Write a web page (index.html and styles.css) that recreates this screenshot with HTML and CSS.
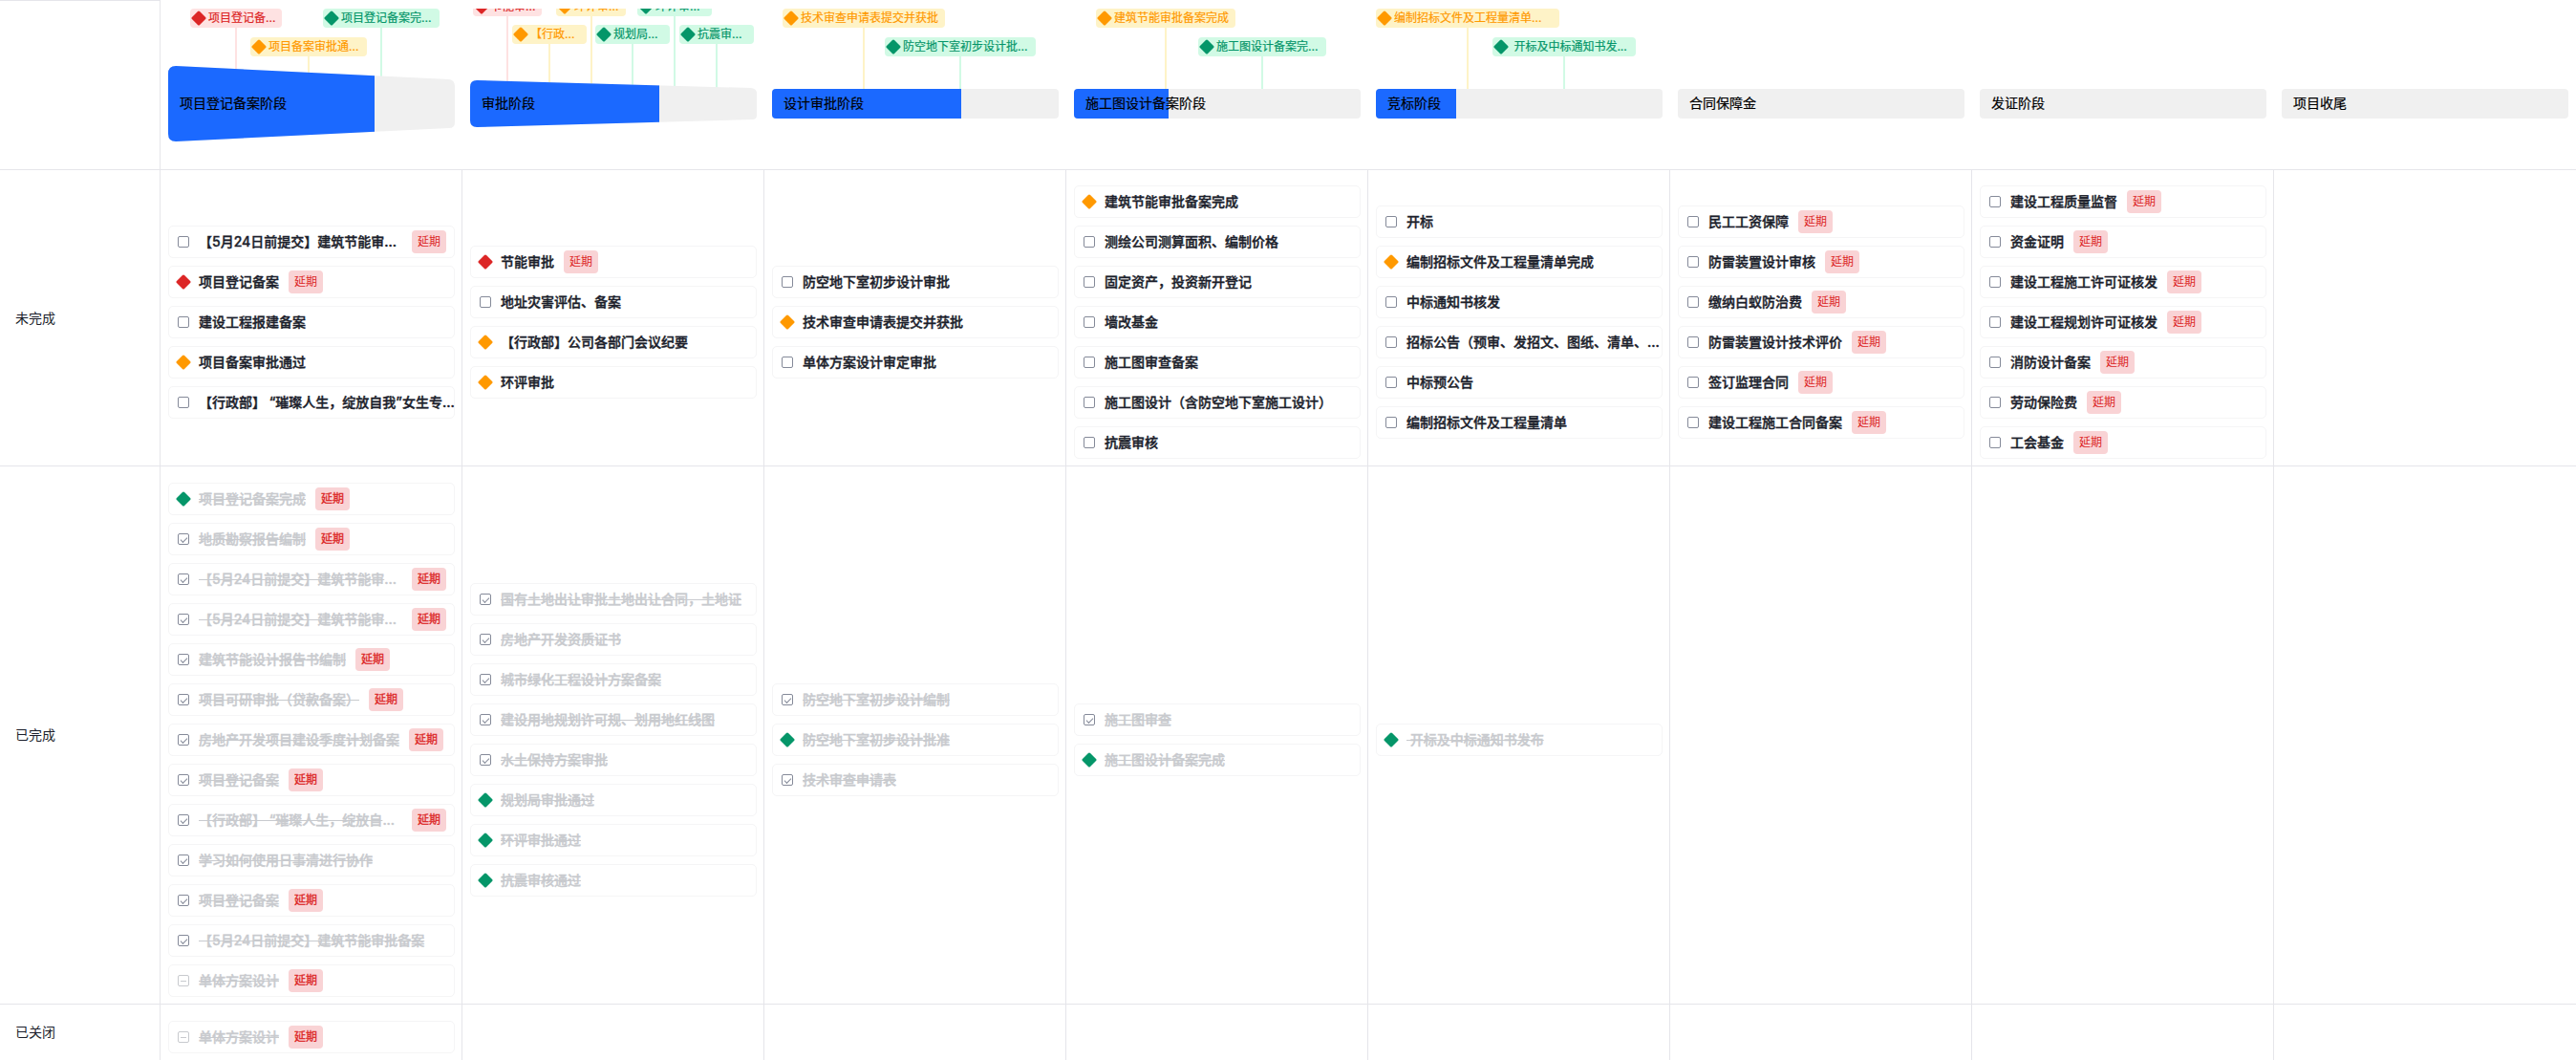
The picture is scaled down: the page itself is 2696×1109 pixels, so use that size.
FILE: index.html
```html
<!DOCTYPE html>
<html lang="zh-CN">
<head>
<meta charset="utf-8">
<title>项目阶段看板</title>
<link rel="stylesheet" href="styles.css">
</head>
<body>
<svg class="defs" aria-hidden="true">
  <symbol id="dia" viewBox="0 0 16 16"><path d="M8 2 14 8 8 14 2 8Z" fill="currentColor" stroke="currentColor" stroke-width="3" stroke-linejoin="round"/></symbol>
</svg>
<table class="board">
<colgroup><col class="col-label"><col><col><col><col><col><col><col><col></colgroup>
<thead>
<tr>
<td class="corner"></td>
<th scope="col"><div class="stage">
  <div class="mile high red" style="left:31px;width:96px"><span class="pill"><svg class="icon"><use href="#dia"/></svg>项目登记备...</span></div>
  <div class="mile low amber" style="left:94px;width:122px"><span class="pill"><svg class="icon"><use href="#dia"/></svg>项目备案审批通...</span></div>
  <div class="mile high green" style="left:170px;width:122px"><span class="pill"><svg class="icon"><use href="#dia"/></svg>项目登记备案完...</span></div>
  <div class="bar"><svg class="shape" viewBox="0 0 300 80" preserveAspectRatio="none"><defs><clipPath id="c1"><path d="M8 0 294 14Q300 15 300 21V59Q300 65 294 65L8 79Q0 79 0 71V8Q0 0 8 0Z"/></clipPath></defs><g clip-path="url(#c1)"><rect class="rest" width="300" height="80"/><rect class="done" width="216" height="80"/></g></svg><span class="name">项目登记备案阶段</span></div>
</div></th>
<th scope="col"><div class="stage">
  <div class="mile top red" style="left:11px;width:72px"><span class="pill"><svg class="icon"><use href="#dia"/></svg>节能审...</span></div>
  <div class="mile mid amber" style="left:52px;width:78px"><span class="pill"><svg class="icon"><use href="#dia"/></svg>【行政...</span></div>
  <div class="mile top amber" style="left:98px;width:73px"><span class="pill"><svg class="icon"><use href="#dia"/></svg>环评审...</span></div>
  <div class="mile mid green" style="left:139px;width:78px"><span class="pill"><svg class="icon"><use href="#dia"/></svg>规划局...</span></div>
  <div class="mile top green" style="left:183px;width:78px"><span class="pill"><svg class="icon"><use href="#dia"/></svg>环评审...</span></div>
  <div class="mile mid green" style="left:227px;width:78px"><span class="pill"><svg class="icon"><use href="#dia"/></svg>抗震审...</span></div>
  <div class="bar"><svg class="shape" viewBox="0 0 300 80" preserveAspectRatio="none"><defs><clipPath id="c2"><path d="M7 15 294 23Q300 24 300 28V52Q300 56 295 56L7 64Q0 64 0 57V22Q0 15 7 15Z"/></clipPath></defs><g clip-path="url(#c2)"><rect class="rest" width="300" height="80"/><rect class="done" width="198" height="80"/></g></svg><span class="name">审批阶段</span></div>
</div></th>
<th scope="col"><div class="stage">
  <div class="mile high amber" style="left:19px;width:170px"><span class="pill"><svg class="icon"><use href="#dia"/></svg>技术审查申请表提交并获批</span></div>
  <div class="mile low green" style="left:126px;width:158px"><span class="pill"><svg class="icon"><use href="#dia"/></svg>防空地下室初步设计批...</span></div>
  <div class="bar"><div class="flat"><div class="fill" style="width:66%"></div></div><span class="name">设计审批阶段</span></div>
</div></th>
<th scope="col"><div class="stage">
  <div class="mile high amber" style="left:31px;width:146px"><span class="pill"><svg class="icon"><use href="#dia"/></svg>建筑节能审批备案完成</span></div>
  <div class="mile low green" style="left:138px;width:134px"><span class="pill"><svg class="icon"><use href="#dia"/></svg>施工图设计备案完...</span></div>
  <div class="bar"><div class="flat"><div class="fill" style="width:33%"></div></div><span class="name">施工图设计备案阶段</span></div>
</div></th>
<th scope="col"><div class="stage">
  <div class="mile high amber" style="left:8px;width:192px"><span class="pill"><svg class="icon"><use href="#dia"/></svg>编制招标文件及工程量清单...</span></div>
  <div class="mile low green" style="left:130px;width:150px"><span class="pill"><svg class="icon"><use href="#dia"/></svg>&nbsp;开标及中标通知书发...</span></div>
  <div class="bar"><div class="flat"><div class="fill" style="width:28%"></div></div><span class="name">竞标阶段</span></div>
</div></th>
<th scope="col"><div class="stage"><div class="bar"><div class="flat"></div><span class="name">合同保障金</span></div></div></th>
<th scope="col"><div class="stage"><div class="bar"><div class="flat"></div><span class="name">发证阶段</span></div></div></th>
<th scope="col"><div class="stage"><div class="bar"><div class="flat"></div><span class="name">项目收尾</span></div></div></th>
</tr>
</thead>
<tbody>
<tr class="row-open">
<th scope="row" class="label">未完成</th>
<td><ul class="cards">
  <li><label class="card"><input type="checkbox"><span class="title">【5月24日前提交】建筑节能审...</span><span class="badge end">延期</span></label></li>
  <li class="card"><svg class="icon red"><use href="#dia"/></svg><span class="title">项目登记备案</span><span class="badge">延期</span></li>
  <li><label class="card"><input type="checkbox"><span class="title">建设工程报建备案</span></label></li>
  <li class="card"><svg class="icon amber"><use href="#dia"/></svg><span class="title">项目备案审批通过</span></li>
  <li><label class="card"><input type="checkbox"><span class="title">【行政部】 “璀璨人生，绽放自我”女生专...</span></label></li>
</ul></td>
<td><ul class="cards">
  <li class="card"><svg class="icon red"><use href="#dia"/></svg><span class="title">节能审批</span><span class="badge">延期</span></li>
  <li><label class="card"><input type="checkbox"><span class="title">地址灾害评估、备案</span></label></li>
  <li class="card"><svg class="icon amber"><use href="#dia"/></svg><span class="title">【行政部】公司各部门会议纪要</span></li>
  <li class="card"><svg class="icon amber"><use href="#dia"/></svg><span class="title">环评审批</span></li>
</ul></td>
<td><ul class="cards">
  <li><label class="card"><input type="checkbox"><span class="title">防空地下室初步设计审批</span></label></li>
  <li class="card"><svg class="icon amber"><use href="#dia"/></svg><span class="title">技术审查申请表提交并获批</span></li>
  <li><label class="card"><input type="checkbox"><span class="title">单体方案设计审定审批</span></label></li>
</ul></td>
<td><ul class="cards">
  <li class="card"><svg class="icon amber"><use href="#dia"/></svg><span class="title">建筑节能审批备案完成</span></li>
  <li><label class="card"><input type="checkbox"><span class="title">测绘公司测算面积、编制价格</span></label></li>
  <li><label class="card"><input type="checkbox"><span class="title">固定资产，投资新开登记</span></label></li>
  <li><label class="card"><input type="checkbox"><span class="title">墙改基金</span></label></li>
  <li><label class="card"><input type="checkbox"><span class="title">施工图审查备案</span></label></li>
  <li><label class="card"><input type="checkbox"><span class="title">施工图设计（含防空地下室施工设计）</span></label></li>
  <li><label class="card"><input type="checkbox"><span class="title">抗震审核</span></label></li>
</ul></td>
<td><ul class="cards">
  <li><label class="card"><input type="checkbox"><span class="title">开标</span></label></li>
  <li class="card"><svg class="icon amber"><use href="#dia"/></svg><span class="title">编制招标文件及工程量清单完成</span></li>
  <li><label class="card"><input type="checkbox"><span class="title">中标通知书核发</span></label></li>
  <li><label class="card"><input type="checkbox"><span class="title">招标公告（预审、发招文、图纸、清单、...</span></label></li>
  <li><label class="card"><input type="checkbox"><span class="title">中标预公告</span></label></li>
  <li><label class="card"><input type="checkbox"><span class="title">编制招标文件及工程量清单</span></label></li>
</ul></td>
<td><ul class="cards">
  <li><label class="card"><input type="checkbox"><span class="title">民工工资保障</span><span class="badge">延期</span></label></li>
  <li><label class="card"><input type="checkbox"><span class="title">防雷装置设计审核</span><span class="badge">延期</span></label></li>
  <li><label class="card"><input type="checkbox"><span class="title">缴纳白蚁防治费</span><span class="badge">延期</span></label></li>
  <li><label class="card"><input type="checkbox"><span class="title">防雷装置设计技术评价</span><span class="badge">延期</span></label></li>
  <li><label class="card"><input type="checkbox"><span class="title">签订监理合同</span><span class="badge">延期</span></label></li>
  <li><label class="card"><input type="checkbox"><span class="title">建设工程施工合同备案</span><span class="badge">延期</span></label></li>
</ul></td>
<td><ul class="cards">
  <li><label class="card"><input type="checkbox"><span class="title">建设工程质量监督</span><span class="badge">延期</span></label></li>
  <li><label class="card"><input type="checkbox"><span class="title">资金证明</span><span class="badge">延期</span></label></li>
  <li><label class="card"><input type="checkbox"><span class="title">建设工程施工许可证核发</span><span class="badge">延期</span></label></li>
  <li><label class="card"><input type="checkbox"><span class="title">建设工程规划许可证核发</span><span class="badge">延期</span></label></li>
  <li><label class="card"><input type="checkbox"><span class="title">消防设计备案</span><span class="badge">延期</span></label></li>
  <li><label class="card"><input type="checkbox"><span class="title">劳动保险费</span><span class="badge">延期</span></label></li>
  <li><label class="card"><input type="checkbox"><span class="title">工会基金</span><span class="badge">延期</span></label></li>
</ul></td>
<td></td>
</tr>
<tr class="row-done">
<th scope="row" class="label">已完成</th>
<td><ul class="cards">
  <li class="card"><svg class="icon green"><use href="#dia"/></svg><span class="title">项目登记备案完成</span><span class="badge">延期</span></li>
  <li><label class="card"><input type="checkbox" checked><span class="title">地质勘察报告编制</span><span class="badge">延期</span></label></li>
  <li><label class="card"><input type="checkbox" checked><span class="title">【5月24日前提交】建筑节能审<span class="more">...</span></span><span class="badge end">延期</span></label></li>
  <li><label class="card"><input type="checkbox" checked><span class="title">【5月24日前提交】建筑节能审<span class="more">...</span></span><span class="badge end">延期</span></label></li>
  <li><label class="card"><input type="checkbox" checked><span class="title">建筑节能设计报告书编制</span><span class="badge">延期</span></label></li>
  <li><label class="card"><input type="checkbox" checked><span class="title">项目可研审批（贷款备案）</span><span class="badge">延期</span></label></li>
  <li><label class="card"><input type="checkbox" checked><span class="title">房地产开发项目建设季度计划备案</span><span class="badge">延期</span></label></li>
  <li><label class="card"><input type="checkbox" checked><span class="title">项目登记备案</span><span class="badge">延期</span></label></li>
  <li><label class="card"><input type="checkbox" checked><span class="title">【行政部】 “璀璨人生，绽放自<span class="more">...</span></span><span class="badge end">延期</span></label></li>
  <li><label class="card"><input type="checkbox" checked><span class="title">学习如何使用日事清进行协作</span></label></li>
  <li><label class="card"><input type="checkbox" checked><span class="title">项目登记备案</span><span class="badge">延期</span></label></li>
  <li><label class="card"><input type="checkbox" checked><span class="title">【5月24日前提交】建筑节能审批备案</span></label></li>
  <li><label class="card"><input type="checkbox" class="closed"><span class="title">单体方案设计</span><span class="badge">延期</span></label></li>
</ul></td>
<td><ul class="cards">
  <li><label class="card"><input type="checkbox" checked><span class="title">国有土地出让审批土地出让合同，土地证</span></label></li>
  <li><label class="card"><input type="checkbox" checked><span class="title">房地产开发资质证书</span></label></li>
  <li><label class="card"><input type="checkbox" checked><span class="title">城市绿化工程设计方案备案</span></label></li>
  <li><label class="card"><input type="checkbox" checked><span class="title">建设用地规划许可规、划用地红线图</span></label></li>
  <li><label class="card"><input type="checkbox" checked><span class="title">水土保持方案审批</span></label></li>
  <li class="card"><svg class="icon green"><use href="#dia"/></svg><span class="title">规划局审批通过</span></li>
  <li class="card"><svg class="icon green"><use href="#dia"/></svg><span class="title">环评审批通过</span></li>
  <li class="card"><svg class="icon green"><use href="#dia"/></svg><span class="title">抗震审核通过</span></li>
</ul></td>
<td><ul class="cards">
  <li><label class="card"><input type="checkbox" checked><span class="title">防空地下室初步设计编制</span></label></li>
  <li class="card"><svg class="icon green"><use href="#dia"/></svg><span class="title">防空地下室初步设计批准</span></li>
  <li><label class="card"><input type="checkbox" checked><span class="title">技术审查申请表</span></label></li>
</ul></td>
<td><ul class="cards">
  <li><label class="card"><input type="checkbox" checked><span class="title">施工图审查</span></label></li>
  <li class="card"><svg class="icon green"><use href="#dia"/></svg><span class="title">施工图设计备案完成</span></li>
</ul></td>
<td><ul class="cards">
  <li class="card"><svg class="icon green"><use href="#dia"/></svg><span class="title">&nbsp;开标及中标通知书发布</span></li>
</ul></td>
<td></td><td></td><td></td>
</tr>
<tr class="row-closed">
<th scope="row" class="label">已关闭</th>
<td><ul class="cards">
  <li><label class="card"><input type="checkbox" class="closed"><span class="title">单体方案设计</span><span class="badge">延期</span></label></li>
</ul></td>
<td></td><td></td><td></td><td></td><td></td><td></td><td></td>
</tr>
</tbody>
</table>
</body>
</html>
```
FILE: styles.css
```css
* { box-sizing: border-box; }

body {
  margin: 0;
  background: #fff;
  color: #1b1e2b;
  font-family: Inter, "Noto Sans CJK SC", sans-serif;
  font-size: 14px;
  line-height: 20px;
}

.defs { display: none; }

.red { color: #dc2626; --tint: #fee2e2; }
.amber { color: #ff9900; --tint: #fef3c7; }
.green { color: #059669; --tint: #d1fae5; }

/* board grid */
.board {
  width: 100%;
  table-layout: fixed;
  border-collapse: separate;
  border-spacing: 0;
}
.col-label { width: 168px; }
.board th, .board td {
  padding: 0;
  vertical-align: middle;
  text-align: left;
  font-weight: 400;
  border-bottom: 1px solid #e5e5ea;
}
.board tbody td, .board tbody th, .corner { border-right: 1px solid #e5e5ea; }
.board .corner { border-top: 1px solid #e5e5ea; }
.board tbody td:last-child { border-right: 0; }
.board tbody td { padding: 17px 7px 7px 8px; }
.board .row-open td { padding-top: 16px; }
.board .row-closed td, .board .row-closed th { border-bottom: 0; }
.board .label { padding-left: 16px; }

/* stage header */
.stage {
  position: relative;
  margin-top: 9px;
  padding: 60px 8px 28px;
  overflow: hidden;
}
.bar {
  position: relative;
  display: flex;
  align-items: center;
  height: 80px;
  padding: 0 12px 2px;
}
.shape, .flat { position: absolute; left: 0; width: 100%; }
.shape { top: 0; height: 80px; }
.flat {
  top: 24px;
  height: 31px;
  border-radius: 4px;
  background: #f0f0f0;
  overflow: hidden;
}
.fill { height: 100%; background: #1b69ff; }
.rest { fill: #f0f0f0; }
.done { fill: #1b69ff; }
.name { position: relative; color: #000; -webkit-text-stroke: 0.2px; }

/* milestones hang over the stage bar */
.mile {
  position: absolute;
  bottom: 60px;
  display: flex;
  flex-direction: column;
  align-items: center;
}
.mile::after {
  content: "";
  flex: 1;
  width: 2px;
  background: var(--tint);
}
.high { top: 0; }
.low { top: 30px; }
.top { top: -12px; }
.mid { top: 17px; }
.pill {
  display: flex;
  align-items: center;
  gap: 2px;
  width: 100%;
  height: 20px;
  padding-left: 1px;
  border-radius: 4px;
  background: var(--tint);
  font-size: 12px;
  white-space: nowrap;
  -webkit-text-stroke: 0.2px;
}

.icon { flex: none; width: 16px; height: 16px; }

/* task cards */
.cards {
  display: flex;
  flex-direction: column;
  gap: 8px;
  margin: 0;
  padding: 0;
  list-style: none;
}
.card {
  display: flex;
  align-items: center;
  height: 34px;
  padding-left: 7px;
  border: 1px solid #f5f5f6;
  border-radius: 5px;
  font-weight: 500;
}
.title { margin-left: 8px; white-space: nowrap; -webkit-text-stroke: 0.4px; }
.row-done .title, .row-closed .title {
  color: #c8cace;
  text-decoration: line-through;
}
.row-done .more { display: inline-block; text-decoration: none; }
.badge {
  flex: none;
  height: 24px;
  margin-left: 10px;
  padding: 0 6px;
  border-radius: 4px;
  background: #f9d3d5;
  color: #dc2626;
  font-size: 12px;
  font-weight: 400;
  line-height: 24px;
}
.row-done .badge, .row-closed .badge { -webkit-text-stroke: 0.3px; }
.badge.end { margin-left: auto; margin-right: 8px; }

input[type="checkbox"] {
  appearance: none;
  flex: none;
  display: grid;
  place-items: center;
  width: 12px;
  height: 12px;
  margin: 0 2px;
  border: 1px solid #858a99;
  border-radius: 2px;
}
input:checked::after {
  content: "";
  width: 6px;
  height: 3px;
  margin-bottom: 1px;
  border: solid #858a99;
  border-width: 0 0 1px 1px;
  transform: rotate(-45deg);
}
input[type="checkbox"].closed { border-color: #c8cace; }
input.closed::after {
  content: "";
  width: 6px;
  height: 1px;
  background: #c8cace;
}
```
